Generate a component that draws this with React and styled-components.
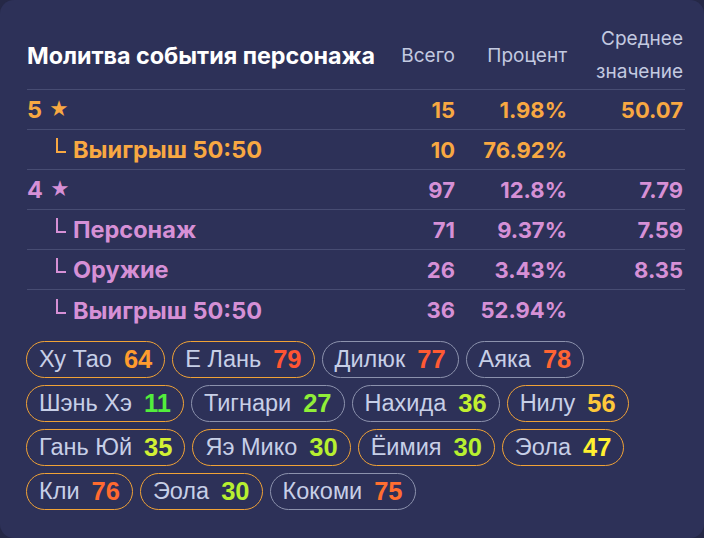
import styled, { createGlobalStyle } from "styled-components";

const GlobalStyle = createGlobalStyle`
  html, body {
    margin: 0;
    padding: 0;
    background: #252846;
  }
`;

const Card = styled.section`
  box-sizing: border-box;
  width: 704px;
  height: 538px;
  background: #2d3158;
  border-radius: 14px;
  padding: 22px 19px 0 27px;
  font-family: Inter, "Noto Sans", sans-serif;
`;

const Grid = styled.div`
  display: grid;
  grid-template-columns: minmax(0, 1fr) 84px 112px 116px;
  align-items: center;
  padding-right: 2px;
`;

const HeadRow = styled(Grid)`
  padding-bottom: 1px;
  border-bottom: 1px solid #474c72;
`;

const Title = styled.div`
  color: #ffffff;
  font-size: 23.3px;
  font-weight: 700;
  white-space: nowrap;
`;

const HeadCell = styled.div`
  color: #c3cae0;
  font-size: 19px;
  line-height: 33px;
  text-align: right;
`;

const Row = styled(Grid)`
  box-sizing: border-box;
  height: 40px;
  border-bottom: ${(p) => (p.$last ? "none" : "1px solid #474c72")};
  color: ${(p) => p.$color};
  font-size: 22px;
  font-weight: 700;
`;

const Label = styled.div`
  display: flex;
  align-items: center;
  padding-left: ${(p) => (p.$sub ? "29px" : "0")};
  font-size: 23.5px;
`;

const Branch = styled.span`
  box-sizing: border-box;
  width: 10px;
  height: 15px;
  border-left: 2px solid currentColor;
  border-bottom: 2px solid currentColor;
  margin-right: 7px;
  position: relative;
  top: -4px;
`;

const Star = styled.span`
  font-size: 19px;
  margin-left: 7px;
`;

const Num = styled.div`
  text-align: right;
`;

const Chips = styled.div`
  display: flex;
  flex-wrap: wrap;
  gap: 7px 7px;
  margin-top: 11px;
  margin-left: -1px;
`;

const Chip = styled.div`
  box-sizing: border-box;
  height: 37px;
  display: flex;
  align-items: center;
  padding: 0 12px 0 12px;
  border: 1px solid ${(p) => (p.$gold ? "#f0a236" : "#8c92ad")};
  border-radius: 19px;
  font-family: "Liberation Sans", Arial, sans-serif;
  font-size: 23.5px;
  color: #c7cfe7;
`;

const ChipNum = styled.span`
  margin-left: 12px;
  font-weight: 700;
  font-size: 25.5px;
  color: ${(p) => p.$color};
`;

const ORANGE = "#f8a842";
const PURPLE = "#d690d6";

const rows = [
  { label: "5", star: true, color: ORANGE, total: "15", pct: "1.98%", avg: "50.07" },
  { label: "Выигрыш 50:50", sub: true, color: ORANGE, total: "10", pct: "76.92%", avg: "" },
  { label: "4", star: true, color: PURPLE, total: "97", pct: "12.8%", avg: "7.79" },
  { label: "Персонаж", sub: true, color: PURPLE, total: "71", pct: "9.37%", avg: "7.59" },
  { label: "Оружие", sub: true, color: PURPLE, total: "26", pct: "3.43%", avg: "8.35" },
  { label: "Выигрыш 50:50", sub: true, color: PURPLE, total: "36", pct: "52.94%", avg: "" },
];

const chips = [
  { name: "Ху Тао", n: 64, gold: true, color: "#ff9c2e" },
  { name: "Е Лань", n: 79, gold: true, color: "#ff5533" },
  { name: "Дилюк", n: 77, gold: false, color: "#ff5a33" },
  { name: "Аяка", n: 78, gold: false, color: "#ff6433" },
  { name: "Шэнь Хэ", n: 11, gold: true, color: "#52ee3c" },
  { name: "Тигнари", n: 27, gold: false, color: "#90ef38" },
  { name: "Нахида", n: 36, gold: false, color: "#c2f030" },
  { name: "Нилу", n: 56, gold: true, color: "#ffc83a" },
  { name: "Гань Юй", n: 35, gold: true, color: "#d2f034" },
  { name: "Яэ Мико", n: 30, gold: true, color: "#b8f030" },
  { name: "Ёимия", n: 30, gold: true, color: "#b8f030" },
  { name: "Эола", n: 47, gold: true, color: "#fff030" },
  { name: "Кли", n: 76, gold: true, color: "#ff6a30" },
  { name: "Эола", n: 30, gold: true, color: "#b8f030" },
  { name: "Кокоми", n: 75, gold: false, color: "#ff6e30" },
];

export default function App() {
  return (
    <>
      <GlobalStyle />
      <Card>
        <HeadRow>
          <Title>Молитва события персонажа</Title>
          <HeadCell>Всего</HeadCell>
          <HeadCell>Процент</HeadCell>
          <HeadCell>
            Среднее
            <br />
            значение
          </HeadCell>
        </HeadRow>
        {rows.map((r, i) => (
          <Row key={i} $color={r.color} $last={i === rows.length - 1}>
            <Label $sub={r.sub}>
              {r.sub && <Branch />}
              {r.label}
              {r.star && <Star>★</Star>}
            </Label>
            <Num>{r.total}</Num>
            <Num>{r.pct}</Num>
            <Num>{r.avg}</Num>
          </Row>
        ))}
        <Chips>
          {chips.map((c, i) => (
            <Chip key={i} $gold={c.gold}>
              {c.name}
              <ChipNum $color={c.color}>{c.n}</ChipNum>
            </Chip>
          ))}
        </Chips>
      </Card>
    </>
  );
}
